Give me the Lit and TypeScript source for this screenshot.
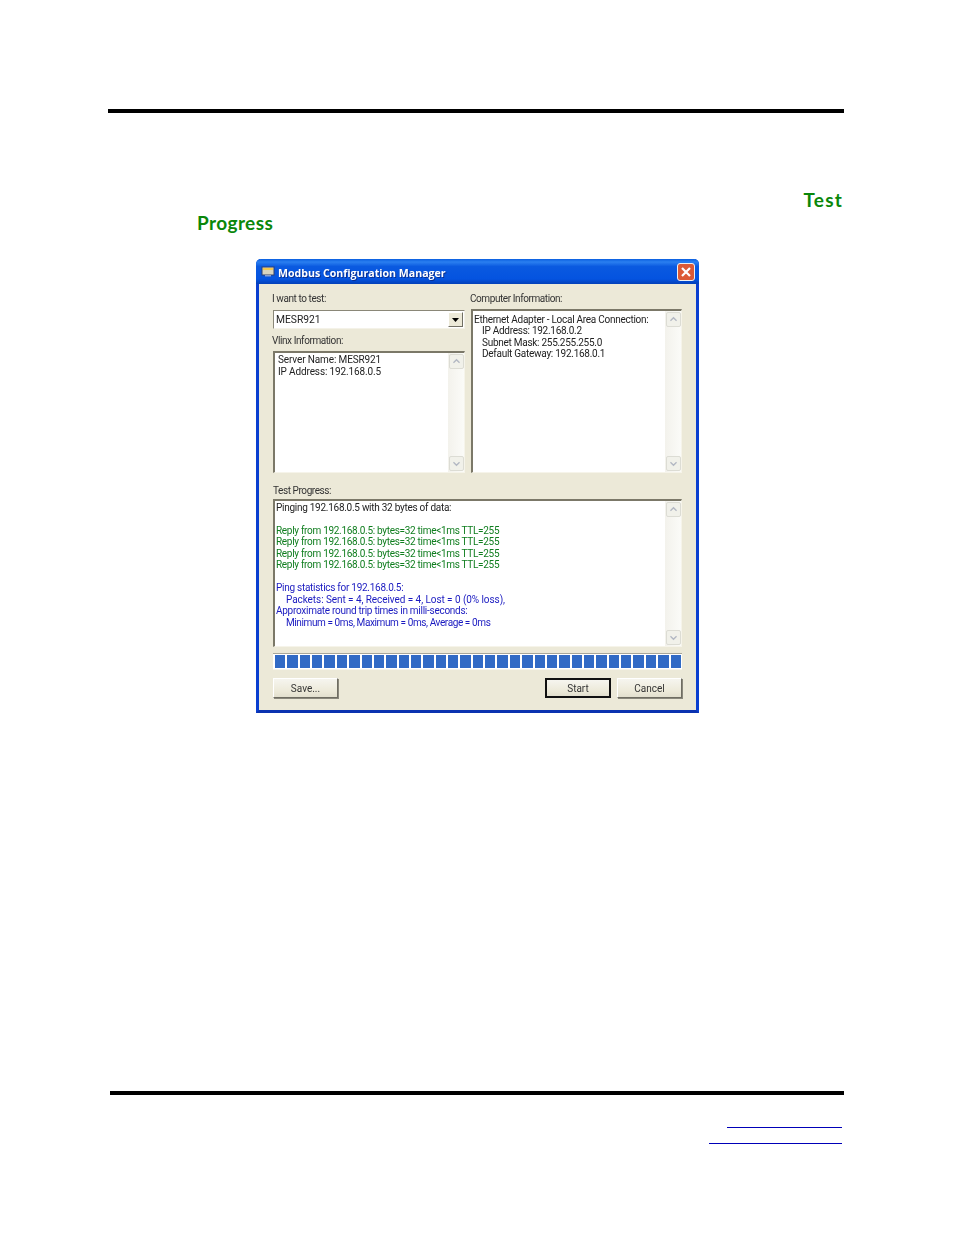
import { LitElement, html, css, svg } from "lit";
import { customElement } from "lit/decorators.js";

const chevUp = svg`<path d="M4 9 L7.5 5.5 L11 9" fill="none" stroke="#b4b9c4" stroke-width="1.6"/>`;
const chevDown = svg`<path d="M4 6 L7.5 9.5 L11 6" fill="none" stroke="#b4b9c4" stroke-width="1.6"/>`;

@customElement("app-root")
export class AppRoot extends LitElement {
  static styles = css`
    :host { display: block; width: 954px; height: 1235px; background: #fff; overflow: hidden; font-family: Roboto, "Liberation Sans", Arial, sans-serif; }
    .rule { background: #000; height: 4px; }
    .rule.top { margin: 109px 110px 0 108px; }
    .heading { margin: 75px 112px 0 197px; font-family: Lato, "Open Sans", sans-serif; font-weight: 700; font-size: 19px; line-height: 23px; color: #0a870a; letter-spacing: 0.4px; }
    .heading .r { text-align: right; letter-spacing: 1.2px; margin-right: -1px; }
    .window { box-sizing: border-box; width: 443px; height: 454px; margin: 25px 0 0 256px; border: 3px solid #0a3fd0; border-bottom-color: #0a32b0; border-top: 0; border-radius: 5px 5px 0 0; background: #ece9d8; display: flex; flex-direction: column; filter: blur(0.3px); }
    .title { box-sizing: border-box; height: 25px; margin: 0 -3px; border-radius: 5px 5px 0 0; background: linear-gradient(#0a5fe0 0%, #2a7ff0 12%, #0a5ae0 30%, #0453e0 80%, #0340b8 100%); display: flex; align-items: center; padding: 0 4px 0 5px; gap: 3px; color: #fff; font-family: "Open Sans", sans-serif; font-weight: 700; font-size: 10.6px; text-shadow: 1px 1px 0 #0a2f90; }
    .title span { flex: 1; padding-top: 2px; }
    .close { width: 18px; height: 18px; display: block; }
    .body { flex: 1; padding: 8px 14px 12px 14px; display: flex; flex-direction: column; color: #222; font-size: 10px; letter-spacing: -0.27px; }
    .label { height: 12px; line-height: 14px; margin-left: -1px; white-space: nowrap; color: #333; letter-spacing: -0.42px; }
    .cols { display: grid; grid-template-columns: 192px 211px; column-gap: 6px; }
    .col { display: flex; flex-direction: column; }
    .select { box-sizing: border-box; height: 19px; margin-top: 6px; background: #fff; border: 1px solid #8a8778; border-right-color: #f4f2e8; border-bottom-color: #f4f2e8; display: flex; align-items: center; padding: 0 1px 0 2px; font-size: 10.3px; letter-spacing: 0; }
    .select span { flex: 1; }
    .drop { width: 15px; height: 15px; background: #ece9d8; border: 1px solid; border-color: #fff #716f64 #716f64 #fff; box-sizing: border-box; display: block; }
    .box { box-sizing: border-box; background: #fff; border-style: solid; border-width: 2px 1px 1px 2px; border-color: #7b7868 #f6f4ea #f6f4ea #7b7868; display: flex; }
    .box .text { flex: 1; white-space: pre; line-height: 11.5px; color: #222; }
    .vlinx { height: 122px; margin-top: 5px; letter-spacing: -0.13px; }
    .vlinx .text { padding: 1px 0 0 3px; }
    .info { height: 164px; margin-top: 5px; }
    .info .text { padding: 2.8px 0 0 1px; }
    .info .in { padding-left: 8px; display: block; }
    .vl2 { margin-top: 5px; }
    .progress-label { margin: 11px 0 0 0; }
    .log { height: 148px; margin-top: 3px; }
    .log .text { padding: 0.8px 0 0 1px; }
    .l { display: block; height: 11.5px; }
    .g { color: #0f7d1e; letter-spacing: -0.3px; }
    .b { color: #1a1ac0; }
    .in2 { padding-left: 10px; }
    .wide { letter-spacing: -0.07px; }
    .tight { letter-spacing: -0.4px; }
    .sb { width: 16px; display: flex; flex-direction: column; justify-content: space-between; padding: 1px 0; background: linear-gradient(90deg, #f3f2ec, #fbfbf8); }
    .sb svg { width: 15px; height: 15px; display: block; background: #f1f1ea; border: 1px solid #dcdcd4; box-sizing: border-box; border-radius: 2px; margin-left: auto; }
    .bar { height: 17px; margin-top: 6px; box-sizing: border-box; border-top: 1px solid #a8a69a; border-bottom: 1px solid #f6f4ea; background: #fff; padding: 1px 1px 1px 2px; display: flex; gap: 2px; }
    .bar i { flex: 1; background: #316ac5; display: block; }
    .buttons { display: flex; margin-top: 8px; height: 20px; }
    .btn { box-sizing: border-box; width: 65px; height: 20px; background: linear-gradient(#f6f5ef, #ece9d8 70%, #e2dfce); border: 1px solid; border-color: #fff #6f6d62 #6f6d62 #fff; box-shadow: 1px 1px 0 #8a887c; display: flex; align-items: center; justify-content: center; color: #333; letter-spacing: 0; }
    .btn.def { width: 66px; border: 2px solid #111; box-shadow: none; margin-left: auto; }
    .btn.cancel { margin-left: 6px; }
    .rule.bottom { margin: 378px 110px 0 110px; }
    .links { margin: 32px 112px 0 0; display: flex; flex-direction: column; align-items: flex-end; }
    .links i { display: block; height: 1px; background: #0000b8; }
    .links .a { width: 115px; }
    .links .c { width: 133px; margin-top: 15px; }
  `;

  private sb() {
    return html`<div class="sb"><svg viewBox="0 0 15 15">${chevUp}</svg><svg viewBox="0 0 15 15">${chevDown}</svg></div>`;
  }

  render() {
    const replies = [0, 1, 2, 3].map(() => html`<span class="l g">Reply from 192.168.0.5: bytes=32 time&lt;1ms TTL=255</span>`);
    const segs = Array.from({ length: 33 }, () => html`<i></i>`);
    return html`
      <div class="rule top"></div>
      <div class="heading"><div class="r">Test</div><div>Progress</div></div>
      <div class="window">
        <div class="title">
          <svg width="14" height="11" viewBox="0 0 14 11"><rect x="1" y="1" width="12" height="8" fill="#d8d4c0" stroke="#33406a"/><rect x="2" y="2" width="10" height="2" fill="#f4c84c"/><rect x="4" y="9" width="6" height="1.5" fill="#8aa0d0"/></svg>
          <span>Modbus Configuration Manager</span>
          <svg class="close" viewBox="0 0 18 18"><rect x="0.5" y="0.5" width="17" height="17" rx="2.5" fill="#dc5a36" stroke="#f0f0f0"/><path d="M5 5 L13 13 M13 5 L5 13" stroke="#fff" stroke-width="2.2"/></svg>
        </div>
        <div class="body">
          <div class="cols">
            <div class="col">
              <div class="label">I want to test:</div>
              <div class="select"><span>MESR921</span>
                <svg class="drop" viewBox="0 0 13 13"><path d="M3 5 H10 L6.5 9 Z" fill="#000"/></svg>
              </div>
              <div class="label vl2">Vlinx Information:</div>
              <div class="box vlinx"><div class="text">Server Name: MESR921
IP Address: 192.168.0.5</div>${this.sb()}</div>
            </div>
            <div class="col">
              <div class="label">Computer Information:</div>
              <div class="box info"><div class="text">Ethernet Adapter - Local Area Connection:<span class="in">IP Address: 192.168.0.2</span><span class="in">Subnet Mask: 255.255.255.0</span><span class="in">Default Gateway: 192.168.0.1</span></div>${this.sb()}</div>
            </div>
          </div>
          <div class="label progress-label">Test Progress:</div>
          <div class="box log"><div class="text"><span class="l">Pinging 192.168.0.5 with 32 bytes of data:</span><span class="l"></span>${replies}<span class="l"></span><span class="l b">Ping statistics for 192.168.0.5:</span><span class="l b in2 wide">Packets: Sent = 4, Received = 4, Lost = 0 (0% loss),</span><span class="l b">Approximate round trip times in milli-seconds:</span><span class="l b in2 tight">Minimum = 0ms, Maximum = 0ms, Average = 0ms</span></div>${this.sb()}</div>
          <div class="bar">${segs}</div>
          <div class="buttons">
            <div class="btn">Save...</div>
            <div class="btn def">Start</div>
            <div class="btn cancel">Cancel</div>
          </div>
        </div>
      </div>
      <div class="rule bottom"></div>
      <div class="links"><i class="a"></i><i class="c"></i></div>
    `;
  }
}
